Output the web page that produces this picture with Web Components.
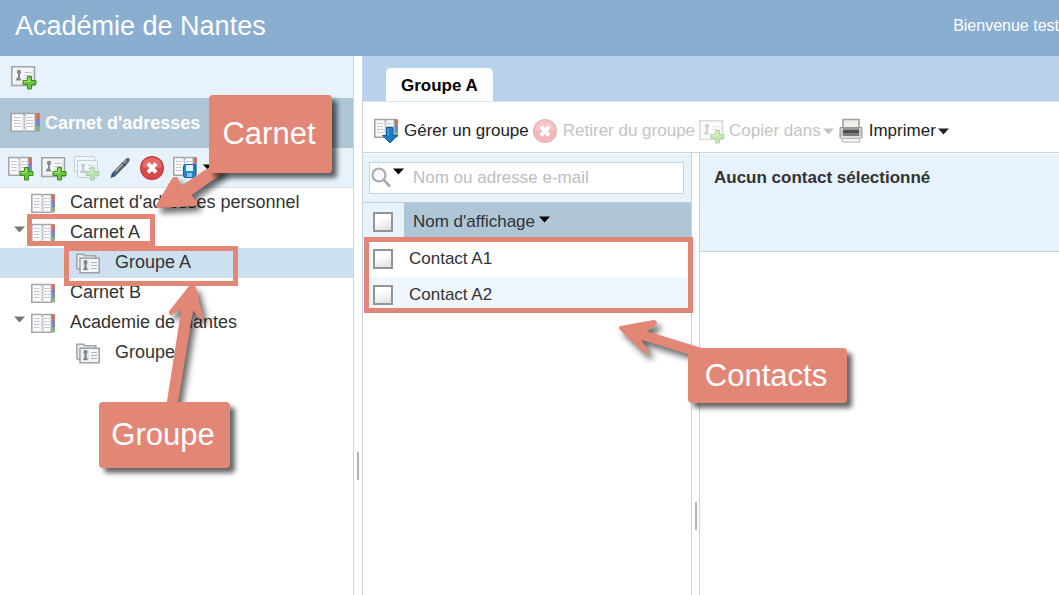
<!DOCTYPE html>
<html lang="fr">
<head>
<meta charset="utf-8">
<title>Carnet d'adresses</title>
<style>
  html, body { height: 100%; }
  body {
    margin: 0; position: relative; overflow: hidden; background: #fff; color: #333;
    font-family: "Liberation Sans", Arial, sans-serif;
    font-size: 17px; line-height: 20px;
    --bar: #e7f2fa; --head: #aec6d6; --line: #c3d6e6; --note: #e28776;
  }
</style>
</head>
<body>
<ab-app></ab-app>

<!-- Tutorial annotations floating above the application -->
<note-frame style="left:27px;top:214px;width:128px;height:32px"></note-frame>
<note-frame style="left:64px;top:246px;width:174px;height:40px"></note-frame>
<note-frame style="left:364px;top:237px;width:329px;height:76px"></note-frame>
<note-arrow points="158,206 174,179 176,179 180,189 212,168 222,171 188,195 195,202 195,204"></note-arrow>
<note-arrow points="190,288 194,288 201,317 200,317 192,305 175,408 168,408 184,305 171,313 171,312"></note-arrow>
<note-arrow points="621,328 654,322 655,323 642,332 704,351 698,355 636,336 647,352 646,352"></note-arrow>
<note-callout style="left:209px;top:95px;width:123px;height:78px">Carnet</note-callout>
<note-callout style="left:99px;top:402px;width:131px;height:66px">Groupe</note-callout>
<note-callout style="left:688px;top:348px;width:159px;height:55px">Contacts</note-callout>

<script>
const define = (name, markup, setup) => {
  const tpl = document.createElement('template');
  tpl.innerHTML = markup;
  customElements.define(name, class extends HTMLElement {
    constructor() {
      super();
      this.attachShadow({ mode: 'open' }).append(tpl.content.cloneNode(true));
    }
    connectedCallback() { if (setup) setup(this, this.shadowRoot); }
  });
};

/* ---------- icons ---------- */
const plus = '<path d="M16.500 12.500h4v4h4.500v4h-4.500v4.500h-4v-4.500H12v-4h4.500z" fill="#6cc63a" stroke="#3b8a22"/><path d="M17.500 13.500v4h-4.500M18 14v4" fill="none" stroke="#a5e56f"/>';
const card = '<path d="M.8 2.800h22.700v18.700H.8z" fill="#f4f5f6" stroke="#a2a4a8" stroke-width="1.600"/><path d="M2.500 20h19.500V5" fill="none" stroke="#d9dbde"/><circle cx="8" cy="8" r="2.200" fill="#858b93"/><path d="M7 9h2v4.500l1.500 3H4.500l1.500-3h1z" fill="#858b93"/><path d="M13.500 8.500h7M13.500 11.500h7M13.500 14.500h5" stroke="#bec3c9"/>';
const book = '<path d="M19 2.500h4.500v17.500H19z" fill="#aaa" stroke="#999ba0"/><path d="M20.500 2.500h3v5h-3z" fill="#e8663a"/><path d="M20.500 7.500h3v4h-3z" fill="#9a6bc8"/><path d="M20.500 11.500h3v4h-3z" fill="#5590d6"/><path d="M20.500 15.500h3v4h-3z" fill="#7cc05e"/><path d="M.8 2.500h9.700l1 1 1-1h7.800v17.800H.8z" fill="#fcfcfd" stroke="#a3a5aa" stroke-width="1.500"/><path d="M9.500 4v15.500h4V4z" fill="#e4e6e9"/><path d="M11.500 3.500v16" stroke="#b0b3b9" stroke-dasharray="2 1"/><path d="M3 6.500h5.500M3 9.500h5.500M3 12.500h5.500M3 15.500h5.500M13.500 6.500h5M13.500 9.500h5M13.500 12.500h5M13.500 15.500h5" stroke="#bcc2ca" stroke-dasharray="2.500 .5"/>';
const icons = {
  'card-add': [26, 26, card + plus],
  'book-add': [26, 26, book + plus],
  'cards-add': [26, 26, '<g opacity=".35"><path d="M.5 1.500h20v15H.5z" fill="#fff" stroke="#8d9398"/><path d="M3.500 5.500h20v17h-20z" fill="#fff" stroke="#8d9398"/><circle cx="9" cy="10.500" r="2" fill="#858b93"/><path d="M8 11h2v4l2 1v2H6v-2l2-1z" fill="#858b93"/><path d="M14 10.500h7M14 13.500h6" stroke="#999"/>' + plus + '</g>'],
  pen: [26, 26, '<path d="M5 20.500l1-3L18 5q3-2.500 4-1.500 1 1.500-1 4L9 20z" fill="#5c6269" stroke="#5c6269"/><path d="M8.500 16.500L19 5.500" stroke="#aab1b9" stroke-width="1.500"/><path d="M3.500 23l1.500-5 4 3z" fill="#24528a"/><path d="M15 8l4 3" stroke="#353a40"/>'],
  remove: [24, 24, '<circle cx="12" cy="12" r="12" fill="#c23a3f"/><circle cx="12" cy="12" r="10.800" fill="#d94748"/><path d="M2 11a10 9.500 0 0 1 20 0q-10 4-20 0z" fill="#e36a68"/><path d="M8 7.500l8 9M16 7.500l-8 9" stroke="#fff" stroke-width="4"/>'],
  'book-save': [26, 26, book + '<rect x="10.500" y="9.500" width="12" height="13" rx="2" fill="#2586d2" stroke="#13609f"/><path d="M13 10h7v6h-7z" fill="#e9f4fc"/><path d="M14 18h5v4h-5z" fill="#8cc1e8"/>'],
  'book-down': [26, 26, '<g transform="translate(0 -1)">' + book + '</g><path d="M12.500 9.500h6.500v8h4.500l-7.500 7.500-7.500-7.500h4z" fill="#1d7bc6" stroke="#0f5c9c"/><path d="M14 10.500v7" stroke="#6db3e8"/>'],
  book: [24, 24, book],
  'book-wide': [30, 24, '<g transform="scale(1.250 1)">' + book + '</g>'],
  group: [24, 24, '<path d="M.8 17V2.300h7l1 1.500h11V7M.8 17H4" fill="#eceded" stroke="#a0a3a7" stroke-width="1.500"/><path d="M4 6.300h19.200v14.500H4z" fill="#f5f6f8" stroke="#9c9fa4" stroke-width="1.500"/><path d="M6.500 8h6.500v11H6.500z" fill="#e1e4ea"/><circle cx="9.500" cy="10" r="2" fill="#7c838f"/><path d="M8.500 11h2v4l1.500 3H7l1.500-3z" fill="#7c838f"/><path d="M15 10.500h6M15 13.500h6M15 16.500h6" stroke="#aeb4bd"/>'],
  printer: [24, 26, '<path d="M4 1.500h16V11H4z" fill="#eeeeea" stroke="#a0a0a0" stroke-width="1.500"/><path d="M1 9.500h22V20H1z" fill="#c9c9cb" stroke="#98989a"/><path d="M4 10h16v2H4z" fill="#999"/><path d="M4 12h16v3H4z" fill="#4e4e50"/><path d="M4 15h16v3H4z" fill="#7b7b7d"/><path d="M2 18h20v2.500H2z" fill="#dededf"/><path d="M3.500 20.500h17l.5 3.500H3z" fill="#f7f7f7" stroke="#b0b0b2"/>'],
  search: [22, 22, '<circle cx="8" cy="8" r="6.500" fill="#f5f9fb" stroke="#a8aaac" stroke-width="2.200"/><path d="M13 13l6 6.500" stroke="#a8aaac" stroke-width="2.600"/>'],
  caret: [11, 7, '<path d="M0 .5h11L5.500 6.500z" fill="currentColor"/>']
};
define('ab-icon', `<style>:host{display:block;flex:none}svg{display:block}</style>`, (el, root) => {
  const [w, h, body] = icons[el.getAttribute('name')];
  root.innerHTML += `<svg width="${w}" height="${h}" viewBox="0 0 ${w} ${h}" fill="none" aria-hidden="true">${body}</svg>`;
});

/* ---------- building blocks ---------- */
define('ab-header', `<style>
  :host{display:flex;justify-content:space-between;height:56px;background:#89aed0;color:#fff;overflow:hidden}
  h1{margin:0;padding-left:15px;font-size:27px;line-height:52px;font-weight:400;white-space:nowrap}
  p{margin:0;font-size:16px;line-height:52px;white-space:nowrap}
</style><h1><slot></slot></h1><p><slot name="user"></slot></p>`);

define('icon-button', `<style>
  :host{display:block;width:33px}
  :host([menu]){width:42px}
  button{display:flex;align-items:center;gap:4px;padding:0;border:0;background:none;color:#000}
</style><button type="button"><slot></slot></button>`, (el, root) =>
  root.querySelector('button').setAttribute('aria-label', el.getAttribute('label')));

define('tool-button', `<style>
  :host{display:block;flex:none}
  button{display:flex;align-items:center;height:28px;padding:0;border:0;background:none;font:inherit;color:#222;white-space:nowrap}
  span{margin:0 2px 0 6px}
  :host([narrow]) span{margin-left:4px}
  button:disabled{color:#c4c4c4}
  button:disabled slot[name=icon]::slotted(*){opacity:.38}
</style><button type="button"><slot name="icon"></slot><span><slot></slot></span><slot name="caret"></slot></button>`, (el, root) =>
  root.querySelector('button').disabled = el.hasAttribute('disabled'));

define('tree-item', `<style>
  :host{display:flex;height:30px;font-size:18px;line-height:28px;white-space:nowrap}
  :host([nested]){padding-left:45px}
  :host([selected]){background:#cde0ef}
  .toggle{box-sizing:border-box;width:31px;padding:8px 0 0 14px;color:#777}
  .toggle ab-icon{display:none}
  :host([open]) .toggle ab-icon{display:block}
  .icon{padding-top:4px;margin-right:15px}
</style><div class="toggle"><ab-icon name="caret"></ab-icon></div><div class="icon"></div><span><slot></slot></span>`, (el, root) => {
  el.setAttribute('role', 'treeitem');
  root.querySelector('.icon').innerHTML = `<ab-icon name="${el.hasAttribute('nested') ? 'group' : 'book'}"></ab-icon>`;
});

define('ab-splitter', `<style>
  :host{display:flex;justify-content:center;background:#fff}
  i{width:2px;height:28px;margin-top:var(--grip);background:#b4b4b0}
</style><i></i>`);

define('ab-sidebar', `<style>
  :host{display:block;border-right:1px solid var(--line);min-width:0}
  .new{display:flex;align-items:center;height:42px;padding-left:11px;background:var(--bar)}
  h2{display:flex;align-items:center;gap:5px;height:50px;margin:0;padding-left:10px;background:var(--head);color:#fff;font-size:18px}
  .tools{display:flex;align-items:center;height:39px;padding-left:8px;background:var(--bar);border-bottom:1px solid #d3e3f0}
</style>
<div class="new"><icon-button label="Nouveau contact"><ab-icon name="card-add"></ab-icon></icon-button></div>
<h2><ab-icon name="book-wide"></ab-icon>Carnet d'adresses</h2>
<div class="tools">
  <icon-button label="Nouveau carnet"><ab-icon name="book-add"></ab-icon></icon-button>
  <icon-button label="Nouveau contact"><ab-icon name="card-add"></ab-icon></icon-button>
  <icon-button label="Nouveau groupe"><ab-icon name="cards-add"></ab-icon></icon-button>
  <icon-button label="Modifier"><ab-icon name="pen"></ab-icon></icon-button>
  <icon-button label="Supprimer"><ab-icon name="remove"></ab-icon></icon-button>
  <icon-button menu label="Exporter"><ab-icon name="book-save"></ab-icon><ab-icon name="caret"></ab-icon></icon-button>
</div>
<div role="tree">
  <tree-item>Carnet d'adresses personnel</tree-item>
  <tree-item open>Carnet A</tree-item>
  <tree-item nested selected>Groupe A</tree-item>
  <tree-item>Carnet B</tree-item>
  <tree-item open>Academie de Nantes</tree-item>
  <tree-item nested>Groupe</tree-item>
</div>`);

define('contact-list', `<style>
  :host{display:block;border-right:1px solid var(--line)}
  .search{height:49px;box-sizing:border-box;padding:8px 7px 8px 6px;background:var(--bar);background-clip:padding-box;border-top:1px solid #fff}
  .box{display:flex;align-items:flex-start;height:32px;padding:4px 0 0 1px;box-sizing:border-box;border:1px solid var(--line);background:#fff}
  .box ab-icon+ab-icon{margin:1px 0 0;color:#000}
  input[type=search]{flex:1;min-width:0;padding:0 0 0 9px;margin:0;border:0;background:none;font:inherit;line-height:22px;height:22px;outline:0}
  input::placeholder{color:#bdbdbd;opacity:1}
  table{width:100%;border-collapse:separate;border-spacing:0;table-layout:fixed}
  th,td{padding:0;text-align:left;font-weight:400;height:36px}
  th{height:37px;border-top:1px solid #b9cfdf;border-bottom:1px solid #d3e3f0;background:var(--bar)}
  th:first-child{width:41px}
  th:last-child{padding-left:9px;background:var(--head)}
  td:last-child{padding-left:5px}
  tr.alt td{background:#eff6fd}
  .sort{display:flex;gap:4px}
  .sort ab-icon{margin-top:4px;color:#000}
  input[type=checkbox]{appearance:none;display:block;box-sizing:border-box;width:20px;height:20px;margin:0 0 0 10px;border:2px solid #949494;background:linear-gradient(160deg,#fff 30%,#dedede)}
</style>
<div class="search"><div class="box"><ab-icon name="search"></ab-icon><ab-icon name="caret"></ab-icon><input type="search" placeholder="Nom ou adresse e-mail" aria-label="Rechercher"></div></div>
<table>
  <thead><tr><th><input type="checkbox" aria-label="Tout"></th><th><div class="sort">Nom d'affichage<ab-icon name="caret"></ab-icon></div></th></tr></thead>
  <tbody>
    <tr><td><input id="a1" type="checkbox"></td><td><label for="a1">Contact A1</label></td></tr>
    <tr class="alt"><td><input id="a2" type="checkbox"></td><td><label for="a2">Contact A2</label></td></tr>
  </tbody>
</table>`);

define('contact-preview', `<style>
  :host{display:block;border-left:1px solid var(--line);min-width:0}
  h3{box-sizing:border-box;height:99px;margin:0;padding:14px 0 0 14px;font-size:17px;line-height:20px;background:var(--bar);background-clip:padding-box;border-top:1px solid #fff;border-bottom:1px solid var(--line)}
</style><h3><slot></slot></h3>`);

define('ab-main', `<style>
  :host{display:flex;flex-direction:column;border-left:1px solid var(--line);min-width:0}
  .tabs{display:flex;align-items:flex-end;height:45px;padding-left:23px;background:#b7d2ea;border-bottom:1px solid #d9e7f3}
  .tab{height:33px;margin:0;padding:2px 15px 0;border:0;border-radius:5px 5px 0 0;background:#fff;color:#000;font:inherit;font-weight:700}
  .tools{display:flex;align-items:center;gap:2px;height:51px;box-sizing:border-box;padding:8px 0 0 11px;border-bottom:1px solid var(--line)}
  .tools [slot=caret]{margin-right:3px}
  .body{flex:1;display:grid;grid-template-columns:329px 7px 1fr;min-height:0}
  ab-splitter{--grip:349px}
</style>
<div class="tabs" role="tablist"><button class="tab" role="tab" type="button" aria-selected="true">Groupe A</button></div>
<div class="tools">
  <tool-button><ab-icon slot="icon" name="book-down" style="width:24px"></ab-icon>Gérer un groupe</tool-button>
  <tool-button disabled><ab-icon slot="icon" name="remove"></ab-icon>Retirer du groupe</tool-button>
  <tool-button disabled narrow><ab-icon slot="icon" name="card-add"></ab-icon>Copier dans<ab-icon slot="caret" name="caret"></ab-icon></tool-button>
  <tool-button><ab-icon slot="icon" name="printer"></ab-icon>Imprimer<ab-icon slot="caret" name="caret"></ab-icon></tool-button>
</div>
<div class="body">
  <contact-list></contact-list>
  <ab-splitter></ab-splitter>
  <contact-preview>Aucun contact sélectionné</contact-preview>
</div>`);

define('ab-app', `<style>
  :host{display:flex;flex-direction:column;height:100%}
  .body{flex:1;display:grid;grid-template-columns:354px 8px 1fr;min-height:0}
  ab-splitter{--grip:396px}
</style>
<ab-header>Académie de Nantes<span slot="user">Bienvenue test</span></ab-header>
<div class="body"><ab-sidebar></ab-sidebar><ab-splitter></ab-splitter><ab-main></ab-main></div>`);

/* ---------- annotations ---------- */
define('note-frame', `<style>:host{position:absolute;box-sizing:border-box;border:5px solid var(--note);pointer-events:none}</style>`);
define('note-callout', `<style>
  :host{position:absolute;display:flex;align-items:center;justify-content:center;box-sizing:border-box;padding-right:3px;border-radius:4px;background:var(--note);color:#fff;font-size:31px;line-height:36px;box-shadow:5px 5px 5px rgba(0,0,0,.6)}
</style><slot></slot>`);
define('note-arrow', `<style>
  :host{position:absolute;left:0;top:0;pointer-events:none}
  svg{display:block;overflow:visible;filter:drop-shadow(4px 5px 3px rgba(0,0,0,.6))}
  polygon{fill:var(--note);stroke:var(--note);stroke-width:4;stroke-linejoin:round}
</style><svg width="860" height="480" aria-hidden="true"><polygon/></svg>`, (el, root) =>
  root.querySelector('polygon').setAttribute('points', el.getAttribute('points')));
</script>
</body>
</html>
